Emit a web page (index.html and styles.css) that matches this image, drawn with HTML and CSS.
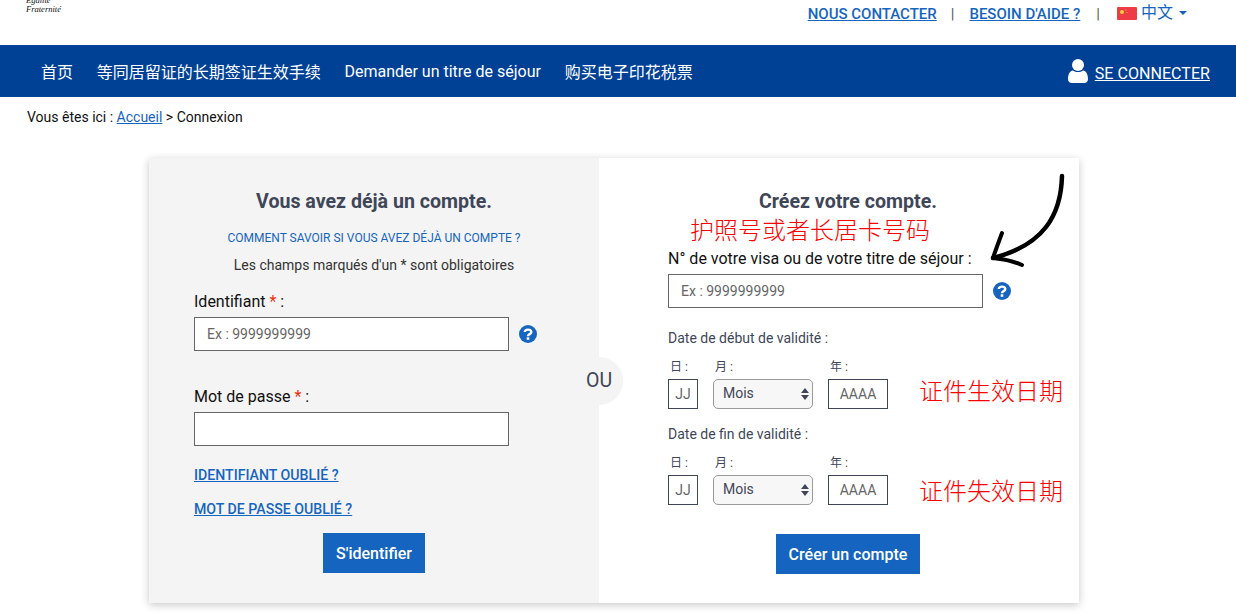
FILE: index.html
```html
<!DOCTYPE html>
<html lang="zh">
<head>
<meta charset="utf-8">
<title>Connexion</title>
<link rel="stylesheet" href="styles.css">
</head>
<body>
<header class="top">
  <div class="motto"><span>Égalité</span><span>Fraternité</span></div>
  <div class="toplinks">
    <a href="#">NOUS CONTACTER</a>
    <span class="sep">|</span>
    <a href="#">BESOIN D'AIDE ?</a>
    <span class="sep sep2">|</span>
    <span class="lang">
      <svg class="flag" width="20" height="13" viewBox="0 0 20 13"><rect width="20" height="13" rx="1" fill="#ee3b45"/><circle cx="5" cy="5" r="2" fill="#f7d038"/><circle cx="9" cy="3" r=".6" fill="#f7d038"/><circle cx="10" cy="5.5" r=".6" fill="#f7d038"/></svg>
      <span class="langname">中文</span><span class="caret"></span>
    </span>
  </div>
</header>
<nav class="nav">
  <a href="#">首页</a>
  <a href="#">等同居留证的长期签证生效手续</a>
  <a href="#">Demander un titre de séjour</a>
  <a href="#">购买电子印花税票</a>
  <a href="#" class="login">
    <svg width="20" height="24" viewBox="0 0 20 24"><circle cx="10" cy="6" r="6" fill="#fff"/><path d="M0 20c0-5 2-8 5-8.500 1.500 1 3 1.500 5 1.500s3.500-.5 5-1.500c3 .5 5 3.500 5 8.500 0 2.500-1.500 4-4 4H4c-2.500 0-4-1.500-4-4z" fill="#fff"/></svg>
    <span>SE CONNECTER</span>
  </a>
</nav>
<p class="crumb">Vous êtes ici : <a href="#">Accueil</a> &gt; Connexion</p>
<main class="card">
  <section class="panel left">
    <h2>Vous avez déjà un compte.</h2>
    <a href="#" class="how">COMMENT SAVOIR SI VOUS AVEZ DÉJÀ UN COMPTE ?</a>
    <p class="req">Les champs marqués d'un * sont obligatoires</p>
    <label class="lab first">Identifiant <b>*</b> :</label>
    <div class="row"><input class="box" placeholder="Ex : 9999999999"><svg class="help" viewBox="0 0 18 18"><circle cx="9" cy="9" r="9" fill="#1565c0"/><path d="M5.800 7C6 3.800 12.300 3.800 12.300 7c0 2.300-3.300 2-3.300 4.200" fill="none" stroke="#fff" stroke-width="2.400"/><rect x="7.700" y="12.300" width="2.600" height="2.500" fill="#fff"/></svg></div>
    <label class="lab second">Mot de passe <b>*</b> :</label>
    <div class="row"><input class="box"></div>
    <a href="#" class="forgot f1">IDENTIFIANT OUBLIÉ ?</a>
    <a href="#" class="forgot f2">MOT DE PASSE OUBLIÉ ?</a>
    <div class="act a1"><button class="btn">S'identifier</button></div>
  </section>
  <section class="panel right">
    <h2>Créez votre compte.</h2>
    <label class="lab visa">N° de votre visa ou de votre titre de séjour :</label>
    <div class="row"><input class="box" placeholder="Ex : 9999999999"><svg class="help" viewBox="0 0 18 18"><circle cx="9" cy="9" r="9" fill="#1565c0"/><path d="M5.800 7C6 3.800 12.300 3.800 12.300 7c0 2.300-3.300 2-3.300 4.200" fill="none" stroke="#fff" stroke-width="2.400"/><rect x="7.700" y="12.300" width="2.600" height="2.500" fill="#fff"/></svg></div>
    <p class="dt d1">Date de début de validité :</p>
    <div class="date">
      <div class="col"><span>日 :</span><input class="small jj" placeholder="JJ"></div>
      <div class="col c2"><span>月 :</span><div class="sel">Mois<i></i></div></div>
      <div class="col c3"><span>年 :</span><input class="small yy" placeholder="AAAA"></div>
    </div>
    <p class="dt d2">Date de fin de validité :</p>
    <div class="date">
      <div class="col"><span>日 :</span><input class="small jj" placeholder="JJ"></div>
      <div class="col c2"><span>月 :</span><div class="sel">Mois<i></i></div></div>
      <div class="col c3"><span>年 :</span><input class="small yy" placeholder="AAAA"></div>
    </div>
    <div class="act a2"><button class="btn">Créer un compte</button></div>
    <span class="note n1">护照号或者长居卡号码</span>
    <span class="note n2">证件生效日期</span>
    <span class="note n3">证件失效日期</span>
    <svg class="arrow" width="85" height="100" viewBox="0 0 85 100" fill="none" stroke="#000" stroke-linecap="round" stroke-linejoin="round"><path d="M78 3C77 42 60 72 9 85" stroke-width="4.500"/><path d="M18 60C15 68 12 76 9 85" stroke-width="4"/><path d="M9 85C19 86 29 88 38 92" stroke-width="4"/></svg>
  </section>
  <span class="ou">OU</span>
</main>
</body>
</html>
```
FILE: styles.css
```css
* { box-sizing: border-box; }
html, body { margin: 0; padding: 0; }
body { width: 1236px; height: 615px; overflow: hidden; background: #fff; font-family: Roboto, "Noto Sans CJK SC", sans-serif; color: #111; font-size: 14px; }
a { color: #1565c0; }
.top { height: 45px; position: relative; display: flex; justify-content: flex-end; }
.motto { position: absolute; left: 26px; top: -4px; display: flex; flex-direction: column; font: italic 8.500px/9px "Liberation Serif", serif; color: #111; }
.toplinks { display: flex; align-items: flex-start; padding: 5px 49px 0 0; font-size: 15px; font-weight: 500; line-height: 18px; }
.sep { color: #555; margin: 0 15px 0 14px; font-weight: 400; }
.sep2 { margin: 0 17px 0 16px; }
.lang { display: flex; align-items: center; color: #1565c0; font-weight: 400; font-size: 16px; height: 16px; }
.flag { margin-right: 4px; }
.caret { width: 0; height: 0; margin-left: 6px; border: 4px solid transparent; border-top-color: #1565c0; border-bottom: 0; }
.nav { height: 52px; background: #004196; display: flex; align-items: center; padding: 0 26px 0 41px; gap: 23.700px; }
.nav a { color: #fff; text-decoration: none; font-size: 16px; font-weight: 400; }
.nav .login { margin-left: auto; display: flex; align-items: flex-end; gap: 7px; font-size: 16.100px; }
.nav .login span { text-decoration: underline; line-height: 18px; }
.crumb { margin: 0; padding: 12px 0 0 27px; line-height: 16px; font-size: 14px; height: 61px; }
.card { position: relative; width: 930px; height: 445px; margin-left: 149px; display: flex; box-shadow: 0 2px 8px rgba(0,0,0,.22); }
.panel { position: relative; display: flex; flex-direction: column; }
.left { width: 450px; background: #f4f4f4; padding: 32px 45px 0; }
.right { width: 480px; background: #fff; padding: 32px 51px 0 69px; }
h2 { margin: 0; text-align: center; font-size: 19.600px; line-height: 24px; font-weight: 700; color: #3f4658; }
.how { margin-top: 17px; text-align: center; font-size: 12px; line-height: 14px; text-decoration: none; }
.req { margin: 12px 0 0; text-align: center; font-size: 14px; line-height: 16px; color: #333; }
.lab { display: block; font-size: 16px; line-height: 18px; }
.lab b { color: #e8300f; font-weight: 400; }
.first { margin-top: 20px; }
.second { margin-top: 37px; }
.row { display: flex; align-items: center; margin-top: 6px; }
.box { width: 315px; height: 34px; flex: none; border: 1.500px solid #666; background: #fff; padding: 0 12px; font: 14px Roboto, sans-serif; outline: 0; border-radius: 0; }
.box::placeholder, .small::placeholder { color: #666; opacity: 1; }
.help { width: 18px; height: 18px; margin-left: 10px; flex: none; }
.forgot { font-size: 14.150px; font-weight: 500; line-height: 16px; align-self: flex-start; }
.f1 { margin-top: 21px; }
.f2 { margin-top: 18px; }
.act { display: flex; justify-content: center; }
.a1 { margin-top: 16px; }
.a2 { margin-top: 29px; }
.btn { height: 40px; padding: 0 13px; border: 0; background: #1565c0; color: #fff; font: 500 16px Roboto, sans-serif; }
.visa { margin-top: 36px; color: #111; }
.dt { margin: 0; font-size: 14px; line-height: 16px; color: #3f4658; }
.d1 { margin-top: 22px; }
.d2 { margin-top: 17px; }
.date { display: flex; margin-top: 14px; }
.col { display: flex; flex-direction: column; }
.col span { font-size: 12px; line-height: 14px; height: 14px; padding-left: 2px; color: #3f4658; }
.col > input, .sel { margin-top: 5px; }
.c2, .c3 { margin-left: 15px; }
.small { height: 30px; border: 1.500px solid #3f4658; background: #fff; text-align: center; font: 14px Roboto, sans-serif; padding: 0; border-radius: 0; }
.jj { width: 30px; }
.yy { width: 60px; }
.sel { position: relative; width: 100px; height: 30px; border: 1px solid #999; border-radius: 5px; background: #f7f7f7; padding-left: 9px; font-size: 14px; line-height: 26px; color: #3f4658; }
.sel i { position: absolute; right: 3px; top: 8px; width: 0; height: 0; border: 4px solid transparent; border-bottom: 5px solid #3f4658; border-top: 0; }
.sel i::after { content: ""; position: absolute; left: -4px; top: 7px; width: 0; height: 0; border: 4px solid transparent; border-top: 5px solid #3f4658; border-bottom: 0; }
.note { position: absolute; color: #f00; font-size: 24px; line-height: 28px; font-family: "Noto Sans CJK SC", sans-serif; font-weight: 300; white-space: nowrap; }
.n1 { left: 91px; top: 57px; }
.n2 { left: 320px; top: 218px; }
.n3 { left: 320px; top: 318px; }
.arrow { position: absolute; left: 385px; top: 15px; }
.ou { position: absolute; left: 426px; top: 199px; width: 48px; height: 48px; border-radius: 50%; background: #f4f4f4; text-align: center; font-size: 19.500px; line-height: 48px; color: #3f4658; }
```
